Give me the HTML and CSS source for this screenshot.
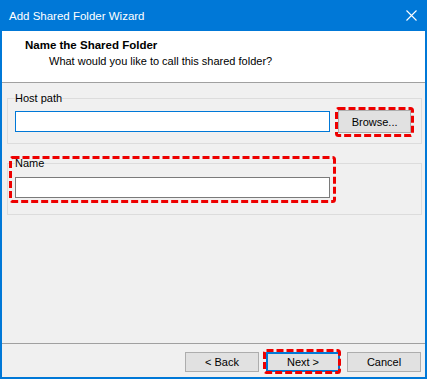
FILE: index.html
```html
<!DOCTYPE html>
<html lang="en">
<head>
    <meta charset="UTF-8">
    <title>Add Shared Folder Wizard</title>
    <link rel="stylesheet" href="styles.css">
</head>
<body>
    <div class="window">
        <div class="titlebar">
            <span class="title">Add Shared Folder Wizard</span>
            <svg class="close" width="11" height="11" viewBox="0 0 11 11">
                <path d="M0.5 0.5 L10.5 10.5 M10.5 0.5 L0.5 10.5" stroke="#fff" stroke-width="1.1" fill="none"/>
            </svg>
        </div>

        <div class="header">
            <h2>Name the Shared Folder</h2>
            <p>What would you like to call this shared folder?</p>
        </div>

        <div class="content">
            <fieldset class="group">
                <legend>Host path</legend>
                <div class="row">
                    <input type="text" class="field focused">
                    <button class="btn browse">Browse...</button>
                </div>
            </fieldset>
            <fieldset class="group">
                <legend>Name</legend>
                <div class="row">
                    <input type="text" class="field name">
                </div>
            </fieldset>
        </div>

        <div class="footer">
            <button class="btn">&lt; Back</button>
            <button class="btn default">Next &gt;</button>
            <button class="btn">Cancel</button>
        </div>

        <!-- red marks drawn over the dialog -->
        <svg class="mark mark-browse" width="79" height="30">
            <rect x="1.5" y="1.5" width="76" height="27" rx="2"/>
        </svg>
        <svg class="mark mark-name" width="327" height="47">
            <rect x="1.5" y="1.5" width="324" height="44" rx="2"/>
        </svg>
        <svg class="mark mark-next" width="78" height="25">
            <rect x="1.5" y="1.5" width="75" height="22" rx="2"/>
        </svg>
    </div>
</body>
</html>
```

FILE: styles.css
```css
html, body {
    margin: 0;
    padding: 0;
    background: #fff;
}
body {
    font-family: "Liberation Sans", Arial, sans-serif;
    font-size: 11px;
    color: #000;
}
.window {
    position: relative;
    width: 427px;
    height: 379px;
    box-sizing: border-box;
    border: 2px solid #0078d7;
    border-top: 0;
    background: #f0f0f0;
    display: flex;
    flex-direction: column;
}
.titlebar {
    height: 31px;
    flex: none;
    background: #0078d7;
    color: #fff;
    display: flex;
    align-items: center;
    justify-content: space-between;
    padding: 0 8px 0 7px;
}
.title {
    font-size: 11.5px;
}
.close {
    margin-top: -1px;
}
.header {
    height: 45px;
    flex: none;
    background: #fff;
    border-bottom: 1px solid #a0a0a0;
    padding: 6px 0 0 23px;
}
.header h2 {
    margin: 0;
    font-size: 11.5px;
    line-height: 16px;
    font-weight: bold;
}
.header p {
    margin: 0 0 0 24px;
    line-height: 16px;
}
.content {
    height: 260px;
    flex: none;
    box-sizing: border-box;
    padding-top: 8px;
}
.group {
    margin: 0 3px 12px 5px;
    border: 1px solid #dcdcdc;
    padding: 5px 10px 10px 7px;
    min-width: 0;
}
.group legend {
    padding: 0;
    line-height: 14px;
}
.group + .group {
    padding-top: 7px;
    padding-bottom: 16px;
}
.row {
    display: flex;
    align-items: center;
    gap: 8px;
}
.field {
    width: 316px;
    height: 21px;
    box-sizing: border-box;
    margin: 0;
    border: 1px solid #7a7a7a;
    background: #fff;
    outline: none;
}
.field.focused {
    border-color: #0078d7;
}
.field.name {
    width: 315px;
}
.btn {
    width: 74px;
    height: 20px;
    box-sizing: border-box;
    margin: 0;
    padding: 0;
    border: 1px solid #adadad;
    background: #e1e1e1;
    font-family: inherit;
    font-size: 11px;
    color: #000;
}
.browse {
    width: 73px;
    height: 23px;
}
.default {
    border: 2px solid #0078d7;
}
.footer {
    flex: 1;
    border-top: 1px solid #a0a0a0;
    display: flex;
    justify-content: flex-end;
    align-items: flex-start;
    gap: 7px;
    padding: 8px 4px 0 0;
}
.mark {
    position: absolute;
}
.mark rect {
    fill: none;
    stroke: #ee0000;
    stroke-width: 3;
    stroke-dasharray: 7 3;
}
.mark-browse {
    left: 333px;
    top: 107px;
}
.mark-name {
    left: 7px;
    top: 156px;
}
.mark-next {
    left: 261px;
    top: 349px;
}
```
